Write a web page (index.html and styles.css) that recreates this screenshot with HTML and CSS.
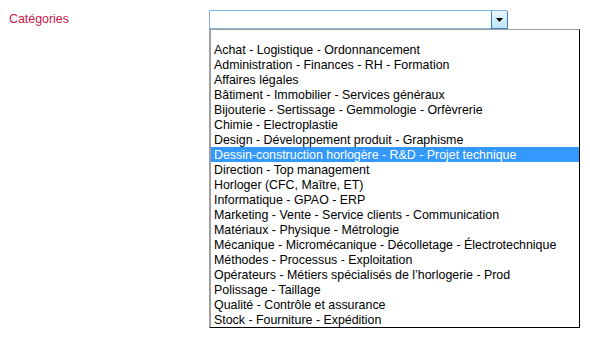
FILE: index.html
```html
<!DOCTYPE html>
<html lang="fr">
<head>
<meta charset="utf-8">
<link rel="stylesheet" href="styles.css">
</head>
<body>
<div class="form-row">
  <label class="label">Catégories</label>
  <div class="combo">
    <div class="select">
      <span class="value"></span>
      <span class="btn"><svg width="7" height="4" viewBox="0 0 7 4"><path d="M0 0h7L3.5 4z" fill="#000"/></svg></span>
    </div>
    <ul class="list">
      <li class="blank"></li>
      <li>Achat - Logistique - Ordonnancement</li>
      <li>Administration - Finances - RH - Formation</li>
      <li>Affaires légales</li>
      <li>Bâtiment - Immobilier - Services généraux</li>
      <li>Bijouterie - Sertissage - Gemmologie - Orfèvrerie</li>
      <li>Chimie - Electroplastie</li>
      <li>Design - Développement produit - Graphisme</li>
      <li class="selected">Dessin-construction horlogère - R&amp;D - Projet technique</li>
      <li>Direction - Top management</li>
      <li>Horloger (CFC, Maître, ET)</li>
      <li>Informatique - GPAO - ERP</li>
      <li>Marketing - Vente - Service clients - Communication</li>
      <li>Matériaux - Physique - Métrologie</li>
      <li>Mécanique - Micromécanique - Décolletage - Électrotechnique</li>
      <li>Méthodes - Processus - Exploitation</li>
      <li>Opérateurs - Métiers spécialisés de l’horlogerie - Prod</li>
      <li>Polissage - Taillage</li>
      <li>Qualité - Contrôle et assurance</li>
      <li>Stock - Fourniture - Expédition</li>
    </ul>
  </div>
</div>
</body>
</html>
```
FILE: styles.css
```css
html, body { margin: 0; padding: 0; background: #fff; }
body { font-family: "Liberation Sans", Arial, sans-serif; font-size: 12.4px; color: #000; }
.form-row { display: flex; padding: 10px 0 0 9px; }
.label { width: 200px; color: #c8174b; padding-top: 2px; line-height: 15px; }
.combo { display: flex; flex-direction: column; }
.select {
  width: 297px; height: 17px;
  border: 1px solid #7eb4ea;
  border-right: none;
  display: flex; justify-content: flex-end;
  background: #fff;
}
.btn {
  width: 15px; height: 17px;
  border: 1px solid #3c7fb1;
  border-top: none;
  margin-right: -1px;
  background: linear-gradient(#eaf6fd, #bee6fd);
  display: flex; align-items: center; justify-content: center;
}
.list {
  list-style: none; margin: 0; padding: 0;
  width: 368px;
  border-top: 1px solid #a0a0a0;
  border-left: 2px solid #a0a0a0;
  border-right: 1px solid #000;
  border-bottom: 1px solid #000;
}
.list li { height: 14px; padding-top: 1px; line-height: 15px; padding-left: 3px; white-space: nowrap; }
.list li.blank { height: 12px; padding-top: 0; }
.list li.selected { background: #3399ff; color: #fff; }
```
